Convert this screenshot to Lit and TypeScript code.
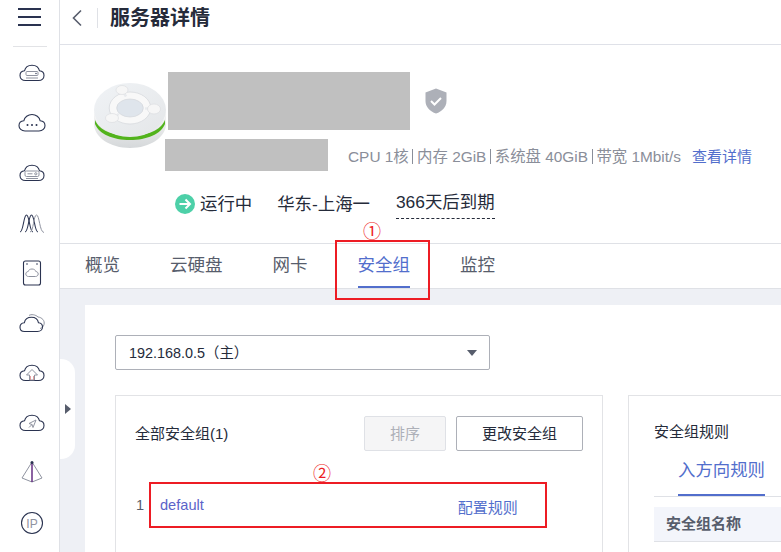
import { LitElement, css, html, svg } from "lit";
import { customElement } from "lit/decorators.js";

const cloud = svg`<path d="M7.500 21.500H20.500C24 21.500 26 19.200 26 16.500C26 13.800 24 12 21.500 11.800C20.800 8.600 17.800 6.200 14 6.200C10.200 6.200 7.200 8.600 6.500 11.800C4 12 2 13.800 2 16.500C2 19.200 4 21.500 7.500 21.500Z" class="dark"/>`;

const navIcons = [
  svg`${cloud}<rect x="8" y="12.500" width="12" height="4" rx="1" class="soft"/><path d="M8 19h12" class="soft"/><circle cx="18" cy="14.500" r=".7" fill="#2a3350"/>`,
  svg`<path d="M7 22H21C24.500 22 27 19.600 27 16.800C27 14 25 12 22.200 11.800C21.400 8.200 18 5.500 14 5.500C10 5.500 6.600 8.200 5.800 11.800C3 12 1 14 1 16.800C1 19.600 3.500 22 7 22Z" class="dark"/><circle cx="9.500" cy="16" r="1" fill="#2a3350"/><circle cx="14" cy="16" r="1" fill="#2a3350"/><circle cx="18.500" cy="16" r="1" fill="#2a3350"/>`,
  svg`${cloud}<rect x="7" y="12" width="14" height="5.500" rx="1.500" class="soft"/><path d="M9.500 14.800h5" class="soft"/><circle cx="17.800" cy="14.800" r="1.100" class="soft"/><path d="M8 19.500h12" class="soft"/>`,
  svg`<path d="M2 23C5.500 23 5.500 6 8.500 6C11.500 6 11.500 23 15 23" class="dark"/><path d="M7 23C10.500 23 10.500 6 13.500 6C16.500 6 16.500 23 20 23" class="dark"/><path d="M12 23C15.500 23 15.500 6 18.500 6C21.500 6 21.500 23 26 23.500" class="soft"/>`,
  svg`<rect x="5.500" y="2" width="17" height="24" rx="2" class="dark"/><circle cx="9" cy="5" r=".8" fill="#2a3350"/><circle cx="19" cy="5" r=".8" fill="#2a3350"/><path d="M10.500 17.500h7c1.600 0 2.700-1.100 2.700-2.500s-1-2.400-2.400-2.500C17.400 10.900 15.900 10 14 10s-3.400.9-3.800 2.500C8.800 12.600 7.800 13.600 7.800 15s1.100 2.500 2.700 2.500z" class="soft"/>`,
  svg`<path d="M11 6.500C13 5 17.500 5.500 20 8C24 8.500 27 11.500 26 15.500C25.500 17.500 24 19 22 19.500" class="soft"/><path d="M6.500 22.500H19.500C22.500 22.500 24.500 20.500 24.500 18C24.500 15.500 22.500 14 20.500 13.800C19.800 10.500 17 8.300 13.500 8.300C10 8.300 7 10.500 6.300 13.800C4 14 2 15.800 2 18.200C2 20.600 3.800 22.500 6.500 22.500Z" class="dark"/>`,
  svg`${cloud}<path d="M14 10.500l5.500 5.500h-3v5h-5v-5h-3z" class="soft"/><path d="M12.500 17v4M15.500 17v4" class="accent"/>`,
  svg`${cloud}<path d="M18 11L11 14.500l3 1 1 3z" class="soft"/><path d="M14 15.500l-3 3" class="soft"/>`,
  svg`<path d="M14 3L4 19l10 4 10-4z" class="soft"/><path d="M14 3v20" stroke="#5a1f7a" stroke-width="1.400" fill="none"/><circle cx="14" cy="3.500" r="1.500" fill="#2a3350"/>`,
  svg`<circle cx="14" cy="14" r="10.500" class="dark"/><text x="14" y="18.500" text-anchor="middle" class="ip">IP</text>`,
];

@customElement("app-root")
export class AppRoot extends LitElement {
  static styles = css`
    :host {
      display: block;
      position: relative;
      width: 781px;
      height: 552px;
      overflow: hidden;
      background: #fff;
      font-family: "Liberation Sans", "Noto Sans CJK SC", sans-serif;
      color: #252b3a;
    }
    .layout {
      display: flex;
      height: 100%;
    }

    /* left nav */
    .nav {
      flex: none;
      width: 59px;
      border-right: 1px solid #dfe1e6;
      display: flex;
      flex-direction: column;
      align-items: center;
      overflow: hidden;
    }
    .burger {
      flex: none;
      width: 23px;
      height: 18px;
      margin: 8px 0 0 -1px;
      display: flex;
      flex-direction: column;
      justify-content: space-between;
    }
    .burger i {
      display: block;
      height: 2.4px;
      background: #2a3350;
    }
    .nav hr {
      flex: none;
      width: 34px;
      height: 1px;
      margin: 20px 0 12px;
      border: 0;
      background: #e2e3e6;
    }
    .nav-icon {
      flex: none;
      width: 28px;
      height: 28px;
      margin-bottom: 22px;
      margin-left: 5px;
    }
    .nav-icon .dark {
      fill: none;
      stroke: #2a3350;
      stroke-width: 1.1;
    }
    .nav-icon .soft {
      fill: none;
      stroke: #8f93a0;
      stroke-width: 1;
    }
    .nav-icon .accent {
      fill: none;
      stroke: #d98a8a;
      stroke-width: 0.8;
    }
    .nav-icon .ip {
      font-size: 12px;
      fill: #8f93a0;
    }

    /* main column */
    .main {
      flex: 1;
      min-width: 0;
      display: flex;
      flex-direction: column;
    }
    .topbar {
      flex: none;
      height: 44px;
      border-bottom: 1px solid #dfe1e8;
      display: flex;
      align-items: center;
    }
    .back {
      width: 12px;
      height: 18px;
      margin: -8px 0 0 11px;
    }
    .topbar .sep {
      width: 1px;
      height: 20px;
      margin: -8px 0 0 14px;
      background: #dfe1e6;
    }
    .topbar h1 {
      margin: -9px 0 0 12px;
      font-size: 20px;
      line-height: 28px;
      font-weight: 700;
      color: #252b3a;
    }

    .summary {
      flex: none;
      height: 198px;
      box-sizing: border-box;
      padding: 27px 0 0 33px;
      display: flex;
    }
    .logo {
      flex: none;
      width: 74px;
      height: 66px;
      margin-top: 10px;
    }
    .facts {
      margin-left: -2px;
      display: flex;
      flex-direction: column;
    }
    .redact {
      background: #c0c0c0;
    }
    .name-row {
      display: flex;
      align-items: center;
      padding-left: 3px;
    }
    .name-row .redact {
      width: 242px;
      height: 58px;
    }
    .shield {
      width: 22px;
      height: 26px;
      margin-left: 15px;
    }
    .spec-row {
      display: flex;
      align-items: flex-end;
      margin-top: 9px;
      font-size: 15.4px;
      color: #8a8e99;
      white-space: nowrap;
    }
    .spec-row .redact {
      width: 163px;
      height: 32px;
      margin-right: 20px;
    }
    .spec-row .specs {
      line-height: 20px;
      margin-bottom: 4px;
    }
    .spec-row b {
      font-weight: 400;
      display: inline-block;
      width: 1px;
      height: 15px;
      margin: 0 3.7px;
      background: #8a8e99;
      vertical-align: -2px;
    }
    .spec-row a {
      margin-left: 11px;
      margin-bottom: 4px;
      line-height: 20px;
      font-size: 15px;
      color: #526ecc;
    }
    .status-row {
      display: flex;
      align-items: center;
      margin: 18px 0 0 10px;
      font-size: 17.4px;
      line-height: 26px;
      white-space: nowrap;
    }
    .status-row svg {
      width: 20px;
      height: 20px;
      margin-right: 5px;
    }
    .status-row .region {
      margin-left: 25px;
    }
    .status-row .expire {
      margin-left: 26px;
      border-bottom: 1px dashed #252b3a;
      padding-bottom: 3px;
    }

    .tabs {
      flex: none;
      height: 46px;
      box-sizing: border-box;
      border-top: 1px solid #dfe1e6;
      border-bottom: 1px solid #dfe1e6;
      display: flex;
      padding-left: 25px;
      gap: 50px;
      font-size: 17.5px;
      color: #575d6c;
    }
    .tabs span {
      line-height: 42px;
      height: 44px;
      box-sizing: border-box;
    }
    .tabs .active {
      color: #526ecc;
      border-bottom: 2px solid #526ecc;
    }

    .content {
      flex: 1;
      min-height: 0;
      background: #eef0f5;
      padding: 16px 0 0 25px;
    }
    .card {
      background: #fff;
      height: 100%;
      padding: 30px 0 0 30px;
      box-sizing: border-box;
      overflow: hidden;
    }
    .select {
      width: 375px;
      height: 35px;
      box-sizing: border-box;
      border: 1px solid #adb0b8;
      border-radius: 2px;
      padding: 0 12px 0 13px;
      display: flex;
      align-items: center;
      justify-content: space-between;
      font-size: 14.4px;
    }
    .select span {
      padding-bottom: 2px;
    }
    .select i {
      width: 0;
      height: 0;
      border-left: 5px solid transparent;
      border-right: 5px solid transparent;
      border-top: 6px solid #575d6c;
    }
    .panels {
      display: flex;
      gap: 25px;
      margin-top: 25px;
    }
    .panel {
      flex: none;
      height: 200px;
      box-sizing: border-box;
      border: 1px solid #e2e3e6;
      border-bottom: 0;
    }
    .groups {
      width: 488px;
      padding: 20px 19px 0 19px;
    }
    .groups-head {
      display: flex;
      align-items: center;
      font-size: 15px;
    }
    .groups-head .title {
      flex: 1;
      padding-bottom: 2px;
    }
    .btn {
      height: 35px;
      box-sizing: border-box;
      border: 1px solid #adb0b8;
      border-radius: 2px;
      padding-bottom: 2px;
      display: flex;
      align-items: center;
      justify-content: center;
      font-size: 15px;
    }
    .btn.off {
      width: 82px;
      margin-right: 10px;
      background: #f5f5f6;
      border-color: #dfe1e6;
      color: #adb0b8;
    }
    .btn.change {
      width: 127px;
    }
    .group-row {
      display: flex;
      align-items: center;
      margin-top: 43px;
      height: 22px;
      font-size: 14.6px;
    }
    .group-row .idx {
      width: 24px;
      padding-left: 1px;
      color: #575d6c;
    }
    .group-row a {
      color: #5b63c9;
    }
    .group-row .cfg {
      margin-left: 254px;
      margin-top: 3px;
      font-size: 15px;
      color: #526ecc;
    }
    .rules {
      width: 300px;
      padding: 25px 0 0 25px;
    }
    .rules .title {
      font-size: 15px;
      line-height: 22px;
    }
    .rule-tabs {
      margin-top: 5px;
      border-bottom: 1px solid #dfe1e6;
      padding-left: 24px;
      height: 49px;
      box-sizing: border-box;
    }
    .rule-tabs span {
      display: inline-block;
      height: 48px;
      box-sizing: border-box;
      line-height: 44px;
      font-size: 17.4px;
      color: #526ecc;
      border-bottom: 2px solid #526ecc;
    }
    .rule-head {
      margin-top: 10px;
      height: 35px;
      box-sizing: border-box;
      background: #f3f5fb;
      border-bottom: 1px solid #dfe1e6;
      padding-left: 12px;
      font-size: 15px;
      line-height: 34px;
      font-weight: 700;
      color: #575d6c;
    }

    /* things lying over the page */
    .handle {
      position: absolute;
      left: 60px;
      top: 359px;
      width: 15px;
      height: 100px;
      background: #fff;
      border-radius: 0 14px 14px 0;
    }
    .handle i {
      position: absolute;
      left: 5px;
      top: 45px;
      border-top: 5px solid transparent;
      border-bottom: 5px solid transparent;
      border-left: 6px solid #575d6c;
    }
    .mark {
      position: absolute;
      box-sizing: border-box;
      border: 2px solid #ed1c24;
    }
    .mark.one {
      left: 335px;
      top: 240px;
      width: 95px;
      height: 60px;
    }
    .mark.two {
      left: 149px;
      top: 482px;
      width: 398px;
      height: 46px;
    }
    .num {
      position: absolute;
      font-size: 18px;
      line-height: 18px;
      color: #ed1c24;
    }
    .num.one {
      left: 363px;
      top: 223px;
    }
    .num.two {
      left: 313px;
      top: 465px;
    }
  `;

  render() {
    return html`
      <div class="layout">
        <nav class="nav">
          <div class="burger"><i></i><i></i><i></i></div>
          <hr />
          ${navIcons.map((icon) => html`<svg class="nav-icon" viewBox="0 0 28 28">${icon}</svg>`)}
        </nav>
        <div class="main">
          <header class="topbar">
            <svg class="back" viewBox="0 0 12 18">
              <path d="M10 1.500L2.500 9l7.500 7.500" fill="none" stroke="#575d6c" stroke-width="1.600" />
            </svg>
            <div class="sep"></div>
            <h1>服务器详情</h1>
          </header>

          <section class="summary">
            <svg class="logo" viewBox="0 0 74 66">
              <defs>
                <linearGradient id="top" x1="0" y1="0" x2="1" y2="1">
                  <stop offset="0" stop-color="#f0f3f6" />
                  <stop offset="1" stop-color="#e4e6e8" />
                </linearGradient>
                <linearGradient id="side" x1="0" y1="0" x2="0" y2="1">
                  <stop offset="0" stop-color="#f4f4f4" />
                  <stop offset="1" stop-color="#d5d8da" />
                </linearGradient>
              </defs>
              <path d="M1 32v10c0 13 16 24 36 24s36-11 36-24V32z" fill="url(#side)" />
              <path d="M2 38C6 48 20 54 37 54s31-6 35-16V42C68 52 54 58 37 58S6 52 2 42z" fill="#52b31c" />
              <path d="M1 30C2 44 18 54 37 54s35-10 36-24z" fill="#f8f8f8" />
              <ellipse cx="37" cy="28" rx="36" ry="27" fill="url(#top)" />
              <ellipse cx="37" cy="26" rx="17" ry="12.500" fill="#dfe5ec" stroke="#f8f8f8" stroke-width="7" />
              <ellipse cx="37" cy="26" rx="20.800" ry="16" fill="none" stroke="#d4d7db" stroke-width=".7" />
              <ellipse cx="37" cy="26" rx="13.200" ry="9" fill="none" stroke="#d4d7db" stroke-width=".7" />
              <path d="M33 14.500L29 8M52 26.500H61M26 32L19 36" stroke="#e9ebee" stroke-width="2.500" fill="none" />
              <ellipse cx="29" cy="8" rx="6" ry="4.500" fill="#f6f6f6" stroke="#d8dadd" stroke-width=".6" />
              <ellipse cx="61" cy="27" rx="6.500" ry="5" fill="#f6f6f6" stroke="#d8dadd" stroke-width=".6" />
              <ellipse cx="19" cy="36" rx="6.500" ry="4.500" fill="#f6f6f6" stroke="#d8dadd" stroke-width=".6" />
            </svg>
            <div class="facts">
              <div class="name-row">
                <div class="redact"></div>
                <svg class="shield" viewBox="0 0 22 26">
                  <path d="M11 .5L21.500 4.500V13C21.500 19 17 23.500 11 25.500C5 23.500 .5 19 .5 13V4.500z" fill="#adb0b8" />
                  <path d="M6 13l3.500 3.500L16 10" fill="none" stroke="#fff" stroke-width="2" />
                </svg>
              </div>
              <div class="spec-row">
                <div class="redact"></div>
                <span class="specs">CPU 1核<b></b>内存 2GiB<b></b>系统盘 40GiB<b></b>带宽 1Mbit/s</span>
                <a>查看详情</a>
              </div>
              <div class="status-row">
                <svg viewBox="0 0 20 20">
                  <circle cx="10" cy="10" r="10" fill="#4dd0a8" />
                  <path d="M4.500 10h10M10.500 5.500L15 10l-4.500 4.500" fill="none" stroke="#fff" stroke-width="2" />
                </svg>
                <span>运行中</span>
                <span class="region">华东-上海一</span>
                <span class="expire">366天后到期</span>
              </div>
            </div>
          </section>

          <div class="tabs">
            <span>概览</span>
            <span>云硬盘</span>
            <span>网卡</span>
            <span class="active">安全组</span>
            <span>监控</span>
          </div>

          <div class="content">
            <div class="card">
              <div class="select"><span>192.168.0.5（主）</span><i></i></div>
              <div class="panels">
                <div class="panel groups">
                  <div class="groups-head">
                    <span class="title">全部安全组(1)</span>
                    <div class="btn off">排序</div>
                    <div class="btn change">更改安全组</div>
                  </div>
                  <div class="group-row">
                    <span class="idx">1</span>
                    <a>default</a>
                    <a class="cfg">配置规则</a>
                  </div>
                </div>
                <div class="panel rules">
                  <div class="title">安全组规则</div>
                  <div class="rule-tabs"><span>入方向规则</span></div>
                  <div class="rule-head">安全组名称</div>
                </div>
              </div>
            </div>
          </div>
        </div>
      </div>

      <div class="handle"><i></i></div>
      <div class="mark one"></div>
      <div class="num one">①</div>
      <div class="mark two"></div>
      <div class="num two">②</div>
    `;
  }
}
